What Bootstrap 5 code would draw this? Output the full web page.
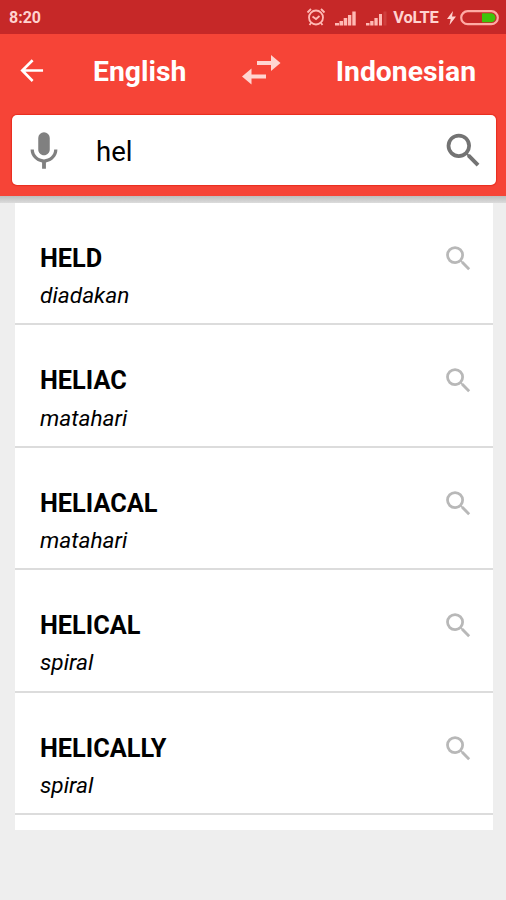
<!DOCTYPE html>
<html lang="en">
<head>
<meta charset="utf-8">
<meta name="viewport" content="width=device-width, initial-scale=1">
<title>Dictionary</title>
<link href="https://cdn.jsdelivr.net/npm/bootstrap@5.3.0/dist/css/bootstrap.min.css" rel="stylesheet">
<style>
body{font-family:Roboto,"Liberation Sans",sans-serif;background:#eee;color:#000;height:900px;overflow:hidden}
svg{display:block;flex:none}
.status-bar{height:34px;background:#c62828;color:#ffd3d0;padding:2px 7.5px 0 9px;font-size:16px;font-weight:700}
.status-bar .volte{font-size:16.5px;margin:0 8px 0 5px;padding-top:1px;letter-spacing:-.2px}
.app-head{height:162px;background:#f64437}
.head-shadow{height:7px;background:linear-gradient(#bdbdbd,#dcdcdc)}
.lang-row{height:81px;padding:0 30px 8px 15px;color:#fff;font-size:28.3px;font-weight:700}
.lang-row span{padding-top:4px}
.lang-row .swap{margin-top:-2px}
.lang-from{margin-left:44px;width:149px}
.search-box{height:70px;margin:0 10px 0 11.5px;border-radius:5px;background:#fff;padding:0 10px 0 9.5px;box-shadow:0 0 1px 1px rgba(225,30,15,.6)}
.query{font-size:27.5px;margin-left:29px;padding-top:4px}
.results{margin:0 13px 0 15px;height:627px;overflow:hidden;background:#fff}
.results .entry{flex:none;height:122.4px;padding:39px 18px 0 25px;border:0;border-bottom:2px solid #dcdcdc;background:#fff;color:#000}
.word{font-size:25.3px;font-weight:700;line-height:32px;margin-top:1px}
.meaning{font-size:22.7px;font-style:italic;line-height:28px;margin-top:7.3px}
</style>
<script src="https://cdn.jsdelivr.net/npm/bootstrap@5.3.0/dist/js/bootstrap.bundle.min.js"></script>
</head>
<body>
<svg width="0" height="0" class="position-absolute"><defs>
<symbol id="lens" viewBox="0 0 24 24"><path d="M15.5 14h-.79l-.28-.27A6.47 6.47 0 0 0 16 9.5 6.5 6.5 0 1 0 9.5 16c1.61 0 3.09-.59 4.23-1.57l.27.28v.79l5 4.99L20.49 19zm-6 0a4.5 4.5 0 1 1 0-9 4.5 4.5 0 0 1 0 9z"/></symbol>
</defs></svg>
<div class="status-bar d-flex align-items-center">
  <span class="me-auto">8:20</span>
  <svg width="20" height="20" viewBox="0 0 20 20" fill="none" stroke="#ffb9b4" stroke-width="1.8"><circle cx="10" cy="9.500" r="7"/><path d="M1.500 4.500 5 1M18.500 4.500 15 1M6.500 8.500l3.500 2.500 3.500-3M5 15l-1.500 2M15 15l1.500 2"/></svg>
  <svg class="ms-2" width="24" height="16" viewBox="0 0 24 16" fill="#ffb9b4"><path d="M1 13h4v2.500H1zM5.500 11h3.500v4.500H5.500zM9.700 8h3.500v7.500H9.700zM14 5h3.300v10.500H14zM18.300 1.500h3.400v14h-3.400z"/></svg>
  <svg class="ms-2" width="22" height="16" viewBox="0 0 22 16" fill="#ffb9b4"><path d="M0 13h3.500v2.500H0zM4.200 11h3.300v4.500H4.200zM8.400 8h3.300v7.500H8.400zM13 4h3v11.500h-3z"/><path d="M17.500 1.500h3v14h-3z" opacity=".15"/></svg>
  <span class="volte">VoLTE</span>
  <svg width="9" height="14" viewBox="0 0 9 14" fill="#ffd3d0"><path d="M6 0 0 8h3.700L2.500 14 9 5.500H5z"/></svg>
  <svg class="ms-1" width="39" height="16" viewBox="0 0 39 16"><rect x="1.200" y="1.200" width="36.600" height="13" rx="6.500" fill="none" stroke="#ffaaa4" stroke-width="2.200"/><path d="M22 3.200h9a4.500 4.500 0 0 1 0 9h-9z" fill="#3fc40a"/></svg>
</div>
<header class="app-head">
  <div class="lang-row d-flex align-items-center">
    <svg width="34" height="34" viewBox="0 0 24 24" fill="#fff"><path transform="translate(-.2 -.3)" d="M20 11.100H7.600l5.700-5.700L12 4l-8 8 8 8 1.300-1.400-5.700-5.700H20z"/></svg>
    <span class="lang-from">English</span>
    <svg class="swap" width="39" height="30" viewBox="0 0 39 30" fill="#ffd5d1"><path d="M15 6h14V0l9.500 8-9.500 8v-6H15zM24 23.500H9.500V29.500L0 21.500l9.500-8v6H24z"/></svg>
    <span class="ms-auto">Indonesian</span>
  </div>
  <div class="search-box d-flex align-items-center">
    <svg width="46" height="46" viewBox="0 0 24 24" fill="#808080"><path transform="translate(0 .8)" d="M12 14c1.660 0 3-1.340 3-3V5a3 3 0 0 0-6 0v6c0 1.660 1.340 3 3 3zM17.300 11c0 3-2.540 5.100-5.300 5.100S6.700 14 6.700 11H5c0 3.410 2.720 6.230 6 6.720V21h2v-3.280c3.280-.48 6-3.300 6-6.720z"/></svg>
    <span class="query">hel</span>
    <svg class="ms-auto" width="45" height="45" fill="#737373"><use href="#lens"/></svg>
  </div>
</header>
<div class="head-shadow"></div>
<main class="results d-flex flex-column">
  <div class="entry d-flex justify-content-between"><div><div class="word">HELD</div><div class="meaning">diadakan</div></div><svg width="33" height="33" fill="#b8b8b8"><use href="#lens"/></svg></div>
  <div class="entry d-flex justify-content-between"><div><div class="word">HELIAC</div><div class="meaning">matahari</div></div><svg width="33" height="33" fill="#b8b8b8"><use href="#lens"/></svg></div>
  <div class="entry d-flex justify-content-between"><div><div class="word">HELIACAL</div><div class="meaning">matahari</div></div><svg width="33" height="33" fill="#b8b8b8"><use href="#lens"/></svg></div>
  <div class="entry d-flex justify-content-between"><div><div class="word">HELICAL</div><div class="meaning">spiral</div></div><svg width="33" height="33" fill="#b8b8b8"><use href="#lens"/></svg></div>
  <div class="entry d-flex justify-content-between"><div><div class="word">HELICALLY</div><div class="meaning">spiral</div></div><svg width="33" height="33" fill="#b8b8b8"><use href="#lens"/></svg></div>
</main>
</body>
</html>
